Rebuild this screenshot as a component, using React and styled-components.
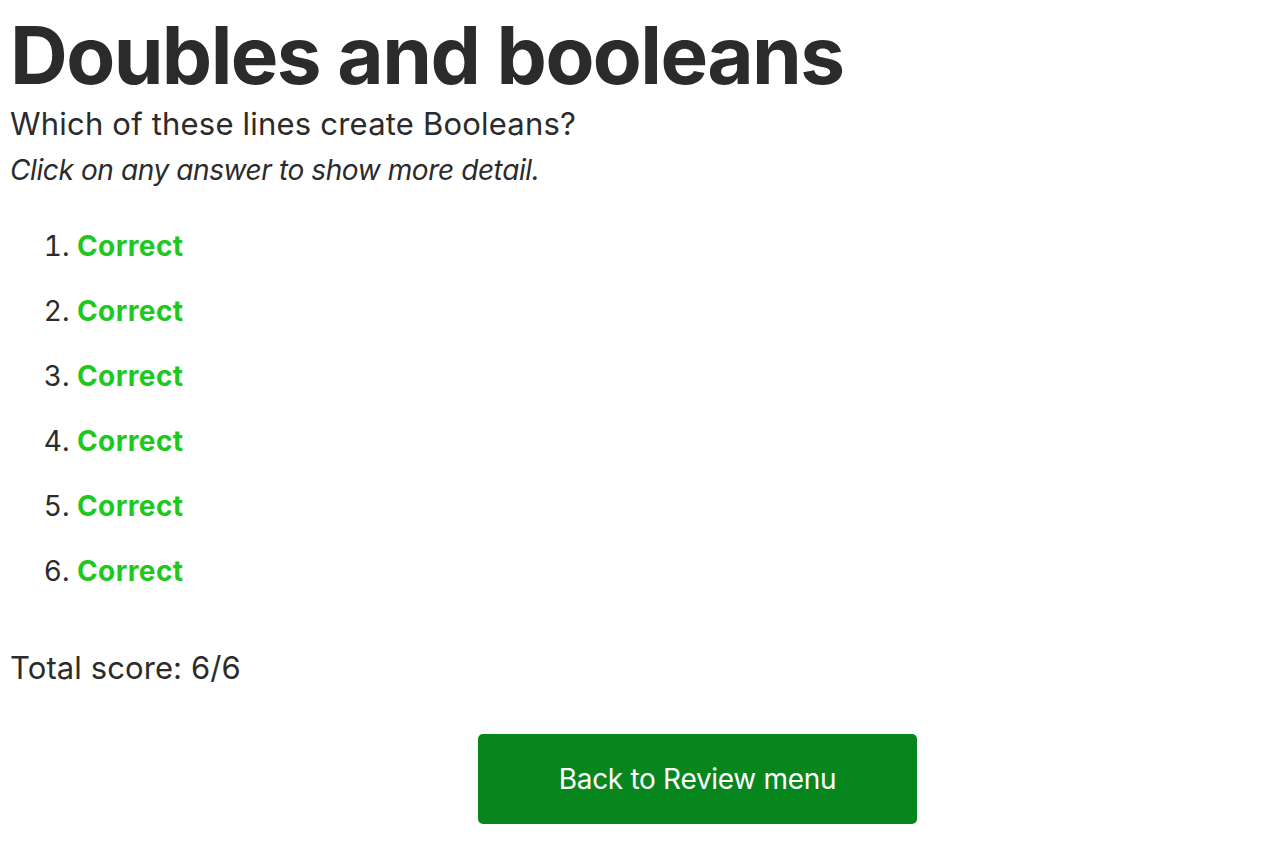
import styled, { createGlobalStyle } from "styled-components";

const GlobalStyle = createGlobalStyle`
  body {
    margin: 0;
    background: #fff;
    font-family: Inter, "Noto Sans", sans-serif;
    color: #2b2b2b;
  }
`;

const Page = styled.main`
  padding: 0 10px;
  display: flex;
  flex-direction: column;
`;

const Title = styled.h1`
  margin: 10px 0 0;
  font-size: 80px;
  font-weight: 700;
  line-height: 90px;
  letter-spacing: -1.6px;
`;

const Question = styled.h2`
  margin: 4px 0 0;
  font-size: 31px;
  font-weight: 400;
  line-height: 40px;
  letter-spacing: 0.2px;
`;

const Hint = styled.p`
  margin: 6px 0 0;
  font-size: 28px;
  font-style: italic;
  line-height: 40px;
  letter-spacing: -0.4px;
`;

const Answers = styled.ol`
  margin: 36px 0 0;
  padding-left: 67px;
  font-size: 28px;
  line-height: 40px;
`;

const Answer = styled.li`
  margin-bottom: 25px;
  cursor: pointer;
  &::marker {
    color: #2b2b2b;
  }
`;

const Verdict = styled.span`
  color: ${(p) => (p.$ok ? "#1ec81e" : "#d32020")};
  font-weight: 700;
  letter-spacing: 0.4px;
`;

const Score = styled.p`
  margin: 32px 0 0;
  font-size: 31px;
  line-height: 40px;
  letter-spacing: 0.1px;
`;

const Actions = styled.div`
  display: flex;
  margin-top: 46px;
  padding-left: 468px;
`;

const Button = styled.button`
  width: 439px;
  height: 90px;
  border: none;
  border-radius: 5px;
  background: #06861d;
  color: #fff;
  font-family: inherit;
  font-size: 28px;
  letter-spacing: -0.3px;
  cursor: pointer;
`;

const results = [true, true, true, true, true, true];

export default function App() {
  const total = results.filter(Boolean).length;
  return (
    <>
      <GlobalStyle />
      <Page>
        <Title>Doubles and booleans</Title>
        <Question>Which of these lines create Booleans?</Question>
        <Hint>Click on any answer to show more detail.</Hint>
        <Answers>
          {results.map((ok, i) => (
            <Answer key={i}>
              <Verdict $ok={ok}>{ok ? "Correct" : "Incorrect"}</Verdict>
            </Answer>
          ))}
        </Answers>
        <Score>
          Total score: {total}/{results.length}
        </Score>
        <Actions>
          <Button>Back to Review menu</Button>
        </Actions>
      </Page>
    </>
  );
}
